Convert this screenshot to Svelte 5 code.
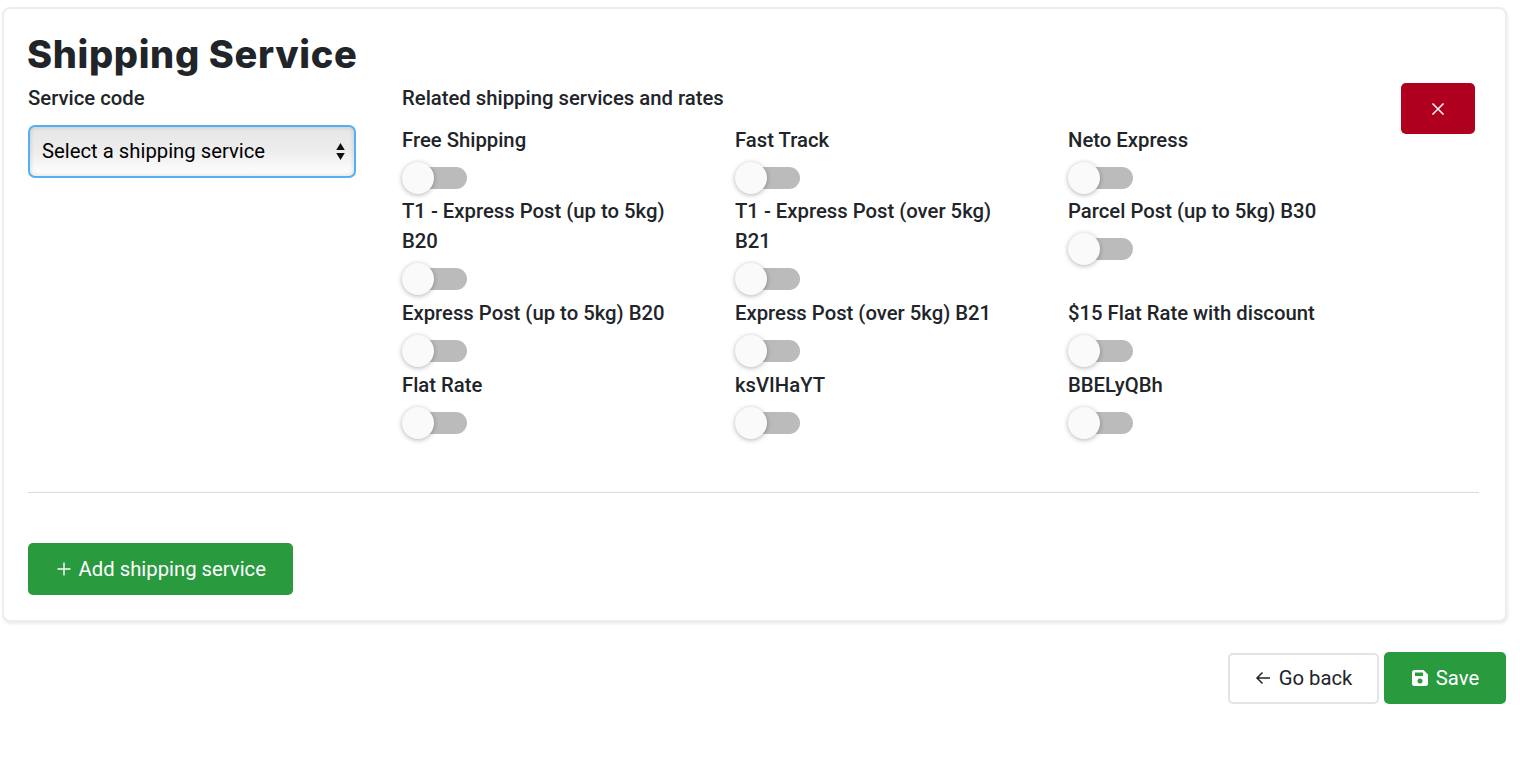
<script>
  const services = [
    'Free Shipping', 'Fast Track', 'Neto Express',
    'T1 - Express Post (up to 5kg) B20', 'T1 - Express Post (over 5kg) B21', 'Parcel Post (up to 5kg) B30',
    'Express Post (up to 5kg) B20', 'Express Post (over 5kg) B21', '$15 Flat Rate with discount',
    'Flat Rate', 'ksVIHaYT', 'BBELyQBh'
  ];
</script>

<div class="page">
  <section class="card">
    <h1>Shipping Service</h1>
    <div class="row">
      <div class="code">
        <div class="label">Service code</div>
        <div class="select">
          <span class="value">Select a shipping service</span>
          <svg class="arrows" width="11" height="19" viewBox="0 0 10 20"><path d="M5 1 9.500 8.500H.5zM5 19 .5 11.500h9z" fill="#111"/></svg>
        </div>
      </div>
      <div class="related">
        <div class="label">Related shipping services and rates</div>
        <div class="grid">
          {#each services as s}
            <div class="item">
              <div class="label name">{s}</div>
              <div class="toggle"><span class="track"></span><span class="knob"></span></div>
            </div>
          {/each}
        </div>
      </div>
      <button class="btn remove" aria-label="Remove">
        <svg width="14" height="14" viewBox="0 0 14 14"><path d="M1.500 1.500l11 11M12.500 1.500l-11 11" stroke="#fff" stroke-width="1.500" fill="none"/></svg>
      </button>
    </div>
    <hr />
    <button class="btn green add">
      <svg width="14" height="14" viewBox="0 0 14 14"><path d="M7 .5v13M.5 7h13" stroke="#fff" stroke-width="1.400" fill="none"/></svg>
      Add shipping service
    </button>
  </section>
  <div class="actions">
    <button class="btn back">
      <svg width="16" height="14" viewBox="0 0 16 14"><path d="M15 7H2M7.500 1.500 2 7l5.500 5.500" stroke="#212529" stroke-width="1.500" fill="none"/></svg>
      Go back
    </button>
    <button class="btn green save">
      <svg width="16" height="16" viewBox="0 0 16 16"><path fill-rule="evenodd" d="M2.500 0H11.500L16 4.500V13.500A2.500 2.500 0 0 1 13.500 16H2.500A2.500 2.500 0 0 1 0 13.500V2.500A2.500 2.500 0 0 1 2.500 0ZM3 2.500V6H11V2.500ZM8 8.500A2.500 2.500 0 1 0 8 13.500 2.500 2.500 0 1 0 8 8.500Z" fill="#fff"/></svg>
      Save
    </button>
  </div>
</div>

<style>
  :global(body) {
    margin: 0;
    background: #fff;
    color: #212529;
    font-family: Roboto, "Liberation Sans", sans-serif;
  }
  .page {
    width: 1506px;
    padding: 7px 0 0 1.500px;
    box-sizing: content-box;
  }
  .card {
    width: 1505px;
    height: 615px;
    box-sizing: border-box;
    border: 2px solid #eceded;
    border-radius: 8px;
    box-shadow: 1px 2px 3px rgba(0, 0, 0, 0.08);
    padding: 0 26px 0 24.500px;
    background: #fff;
  }
  h1 {
    margin: 0 0 0 -1px;
    padding-top: 23px;
    height: 51px;
    font-family: Inter, "Open Sans", sans-serif;
    font-size: 38px;
    line-height: 44px;
    font-weight: 800;
    letter-spacing: 0.65px;
    color: #212529;
  }
  .row {
    display: flex;
    height: 360px;
  }
  .label {
    font-size: 20.300px;
    font-weight: 500;
    line-height: 30px;
    color: #212529;
  }
  .code {
    width: 328px;
    margin-right: 46px;
  }
  .select {
    display: flex;
    align-items: center;
    justify-content: space-between;
    box-sizing: border-box;
    height: 53px;
    margin-top: 12px;
    padding: 0 8.500px 0 12px;
    border: 2px solid #52b1f5;
    border-radius: 7px;
    background: linear-gradient(#e6e6e6 0%, #ececec 45%, #fff 100%);
    box-shadow: inset 0 0 5px rgba(0, 0, 0, 0.16);
    color: #000;
    font-size: 20.300px;
  }
  .value {
    margin-bottom: 2px;
  }
  .related {
    width: 999px;
  }
  .grid {
    display: grid;
    grid-template-columns: repeat(3, 333px);
    margin-top: 11.700px;
  }
  .name {
    width: 290px;
  }
  .toggle {
    position: relative;
    width: 64.500px;
    height: 41.700px;
  }
  .track {
    position: absolute;
    left: 8px;
    right: 0;
    top: 12px;
    height: 22px;
    border-radius: 11px;
    background: #bbb;
  }
  .knob {
    position: absolute;
    left: 0;
    top: 7px;
    width: 32px;
    height: 32px;
    border-radius: 50%;
    background: #fafafa;
    box-shadow: 0 1px 5px rgba(0, 0, 0, 0.3);
  }
  hr {
    margin: 49px 0 0;
    width: 1451px;
    border: 0;
    border-top: 1px solid #dcdcdc;
  }
  .btn {
    display: inline-flex;
    align-items: center;
    justify-content: center;
    gap: 8px;
    box-sizing: border-box;
    height: 52px;
    border: 0;
    border-radius: 5px;
    font-family: inherit;
    font-size: 20.300px;
    padding: 0;
  }
  .green {
    background: #2a9a3f;
    color: #fff;
  }
  .remove {
    width: 74px;
    height: 51px;
    background: #af0020;
  }
  .add {
    width: 265px;
    margin-top: 50px;
    padding-left: 2px;
    gap: 7.500px;
  }
  .actions {
    display: flex;
    justify-content: flex-end;
    align-items: flex-end;
    gap: 5px;
    margin-top: 29.500px;
    width: 1504.500px;
  }
  .back {
    width: 151px;
    height: 51px;
    background: #fff;
    border: 2px solid #e3e3e3;
    color: #212529;
  }
  .save {
    width: 122px;
    padding-left: 1px;
  }
</style>
